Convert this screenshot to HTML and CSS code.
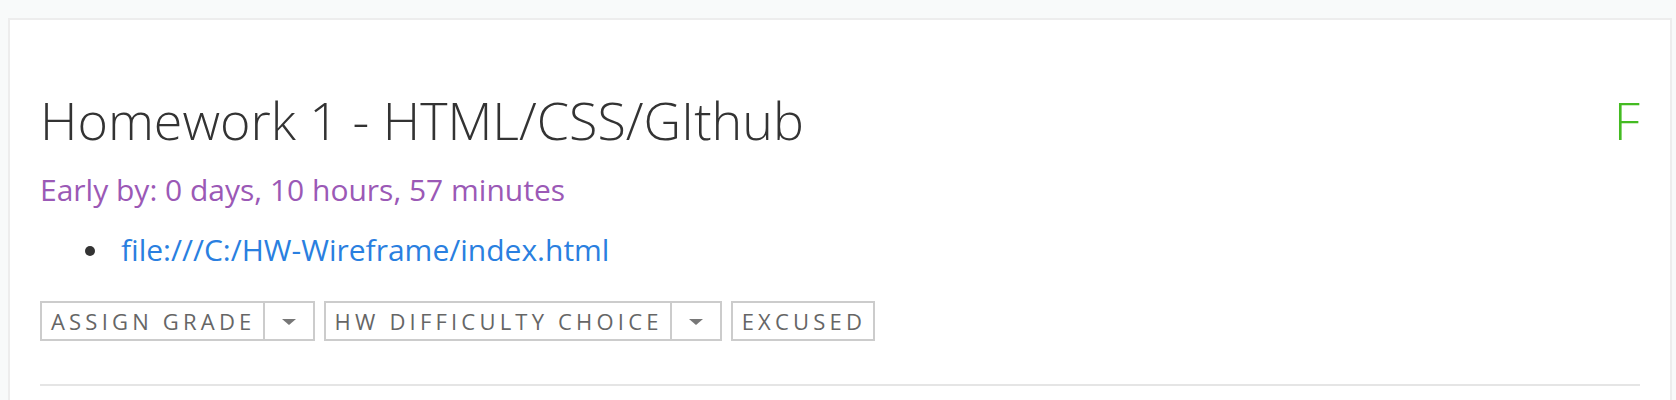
FILE: index.html
```html
<!DOCTYPE html>
<html lang="en">
<head>
<meta charset="utf-8">
<title>Homework 1</title>
<link rel="stylesheet" href="styles.css">
</head>
<body>
<div class="card">
  <div class="header">
    <h1 class="title">Homework 1 - HTML/CSS/GIthub</h1>
    <span class="grade">F</span>
  </div>
  <p class="early">Early by: 0 days, 10 hours, 57 minutes</p>
  <ul class="links">
    <li class="link-item"><a href="#">file:///C:/HW-Wireframe/index.html</a></li>
  </ul>
  <div class="actions">
    <div class="select">
      <span class="select-label">ASSIGN GRADE</span>
      <span class="select-caret"><span class="caret"></span></span>
    </div>
    <div class="select">
      <span class="select-label">HW DIFFICULTY CHOICE</span>
      <span class="select-caret"><span class="caret"></span></span>
    </div>
    <button class="btn">EXCUSED</button>
  </div>
  <hr class="divider">
</div>
</body>
</html>
```

FILE: styles.css
```css
html, body {
  background: #f8fafa;
}
body {
  margin: 18px 4px 0 8px;
  font-family: "Open Sans", "DejaVu Sans", sans-serif;
}
.card {
  background: #fff;
  border: 2px solid #ededed;
  padding: 30px 30px 200px 30px;
}
.header {
  display: flex;
  justify-content: space-between;
  align-items: baseline;
  margin-top: 39px;
}
.title {
  margin: 0;
  font-size: 52px;
  line-height: 62px;
  font-weight: 300;
  color: #333;
}
.grade {
  font-size: 52px;
  line-height: 62px;
  font-weight: 300;
  color: #44bb22;
}
.early {
  margin: 19px 0 0 0;
  font-size: 30px;
  line-height: 40px;
  color: #9b59b6;
}
.links {
  list-style: none;
  margin: 20px 0 0 0;
  padding-left: 45px;
  font-size: 30px;
  line-height: 40px;
}
.link-item {
  display: flex;
  align-items: center;
}
.link-item::before {
  content: "";
  width: 10px;
  height: 10px;
  border-radius: 50%;
  background: #333;
  margin-right: 26px;
  margin-top: 2px;
}
.link-item a {
  color: #2a7fe0;
  text-decoration: none;
}
.actions {
  display: flex;
  gap: 9px;
  margin-top: 31px;
}
.select, .btn {
  display: flex;
  height: 40px;
  box-sizing: border-box;
  border: 2px solid #cccccc;
  background: #fff;
  font-family: "Open Sans", "DejaVu Sans", sans-serif;
  font-size: 22px;
  letter-spacing: 4.2px;
  color: #666;
  align-items: center;
}
.select-label {
  padding: 0 7px 0 9px;
}
.select-caret {
  align-self: stretch;
  width: 48px;
  border-left: 2px solid #cccccc;
  display: flex;
  align-items: center;
  justify-content: center;
}
.caret {
  width: 0;
  height: 0;
  border-left: 7px solid transparent;
  border-right: 7px solid transparent;
  border-top: 6px solid #777;
  margin-top: 2px;
}
.btn {
  padding: 0 7px 0 9px;
  margin: 0;
}
.divider {
  margin: 43px 0 0 0;
  border: 0;
  height: 2px;
  background: #e5e5e5;
}
```
